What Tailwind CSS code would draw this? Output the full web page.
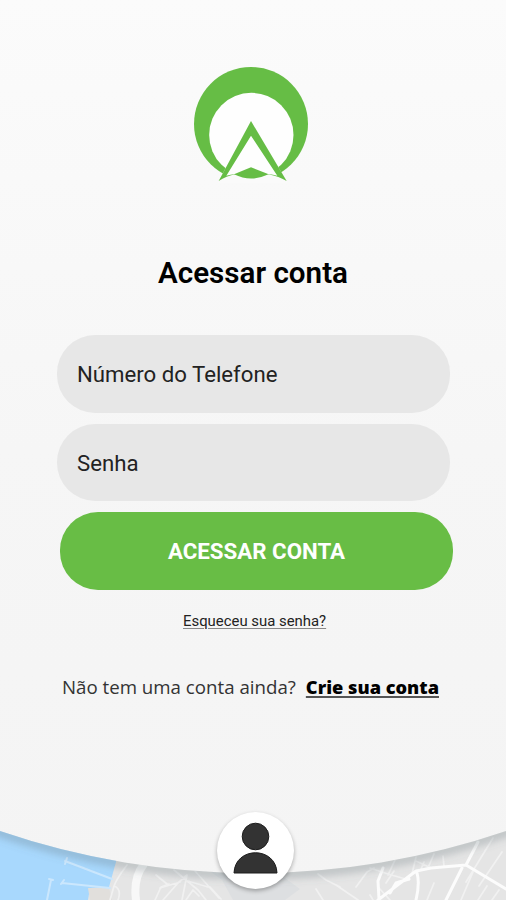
<!DOCTYPE html>
<html lang="pt-BR">
<head>
    <meta charset="UTF-8">
    <meta name="viewport" content="width=device-width, initial-scale=1.0">
    <title>Acessar conta</title>
    <script src="https://cdn.jsdelivr.net/npm/@tailwindcss/browser@4"></script>
</head>
<body class="font-[Roboto,sans-serif] text-black">
    <main class="relative flex flex-col w-[506px] h-[900px] overflow-hidden bg-gradient-to-b from-[#fbfbfb] via-[#f6f6f6] to-[#f4f4f4]">
        <!-- Logo -->
        <svg class="mt-[55px] ml-[180px] w-[140px] h-[140px] shrink-0" viewBox="0 0 420 420">
            <circle cx="213" cy="207" r="171" fill="#66bd45"/>
            <circle cx="214" cy="240" r="126.5" fill="#fefefe"/>
            <path d="M213 198L113 384H323Z" fill="#fafafa"/>
            <path d="M213 242L133 366L170 358L213 366L260 358L300 366Z" fill="#fefefe"/>
            <path d="M213 198L320 378Q298 365 264 358L264 357Q280 359 292 362L213 242L139 362Q150 359 168 357L168 358Q138 363 116 378Z" fill="#66bd45"/>
            <path d="M162 358L213 337L266 358Q213 383 162 358Z" fill="#66bd45"/>
        </svg>

        <h1 class="mt-[60px] ml-[158px] text-[29.6px] leading-9 font-semibold whitespace-nowrap">Acessar conta</h1>

        <!-- Login form -->
        <form class="mt-[44px] ml-[57px] flex flex-col gap-[11px]">
            <div class="flex items-center w-[393px] h-[78px] rounded-[38px] bg-[#e7e7e7] pt-0.5 pl-5 text-[22.2px] text-[#222]">Número do Telefone</div>
            <div class="flex items-center w-[393px] h-[77px] rounded-[38px] bg-[#e7e7e7] pt-0.5 pl-5 text-[22.2px] text-[#222]">Senha</div>
            <button type="button" class="ml-[3px] w-[393px] h-[78px] rounded-[38px] bg-[#68bd45] pt-0.5 text-[22.3px] font-bold text-white">ACESSAR CONTA</button>
        </form>

        <a href="#" class="mt-[21px] ml-[183px] self-start text-[14.9px] leading-5 text-[#222] underline decoration-[#888] underline-offset-2 whitespace-nowrap">Esqueceu sua senha?</a>

        <p class="mt-[42px] ml-[62px] flex items-center gap-[10px] font-['Open_Sans',sans-serif] text-[18.7px] leading-7 text-[#333] whitespace-nowrap">
            <span>Não tem uma conta ainda?</span>
            <a href="#" class="text-[18.2px] font-extrabold text-black underline decoration-[#555] decoration-2 underline-offset-2">Crie sua conta</a>
        </p>

        <!-- Map strip under the curved panel -->
        <svg class="mt-auto w-[506px] h-[80px] shrink-0" viewBox="0 820 506 80">
            <defs>
                <clipPath id="strip">
                    <path d="M0 831A783 783 0 0 0 506 831V900H0Z"/>
                </clipPath>
                <filter id="soft" x="-10%" y="-50%" width="120%" height="200%">
                    <feGaussianBlur stdDeviation="4"/>
                </filter>
            </defs>
            <g clip-path="url(#strip)" fill="none" stroke-linecap="round" stroke-linejoin="round">
                <rect y="820" width="506" height="80" fill="#e5e5e5"/>
                <path d="M195 860L222 880L233 900H285L300 889L260 860Z" fill="#dddfe1"/>
                <path d="M0 820H118L116 862L109 887L90 888L88 900H0Z" fill="#a8d8fd"/>
                <path d="M88 888H109L112 900H90Z" fill="#e1dfdc"/>
                <g stroke="#cbe7fd" stroke-width="2">
                    <path d="M65 861L112 879M67 858L65 864M62 883L110 888M64 880L61 884M51 880L47 900M49 879L53 880"/>
                </g>
                <path d="M144 864Q133 878 136 900" stroke="#f8f8f8" stroke-width="8"/>
                <g stroke="#f1f1f1" stroke-width="1.7">
                    <path d="M127 865Q117 878 114 886Q122 889 118 900M155 900L161 887L169 884M156 875L167 884M110 900L114 886"/>
                    <path d="M163 900L178 883L187 875M187 875L182 900M174 870L198 890L206 900M195 871L219 898M160 888L180 882M188 881L208 887M210 887L221 899M186 900L193 890L199 896"/>
                    <path d="M318 874L326 880L340 887M316 889L323 900M336 885L358 900"/>
                    <path d="M356 887L367 872L374 868M370 868L388 874L409 880M388 875L395 860M412 874L416 857M416 861L431 868M428 868L434 854M443 856L444 866M379 888L390 900M370 895L373 900M386 883L394 871M421 869L424 862"/>
                    <path d="M493 838L466 882M502 852L479 886M473 872L461 900M487 886L478 900M499 890L492 900M434 883L427 900"/>
                </g>
                <g stroke="#fcfcfc" stroke-width="3">
                    <path d="M378 900L416 871L431 868L466 865L506 889M383 868L378 881L379 899M417 873Q420 883 416 900M466 865L478 842M462 868L446 900M390 893L396 883L409 879"/>
                </g>
                <!-- panel shadow -->
                <path d="M-10 829A783 783 0 0 0 516 829" stroke="#5d6b75" stroke-opacity=".36" stroke-width="8" filter="url(#soft)"/>
            </g>
        </svg>

        <!-- User badge -->
        <div class="absolute left-[217px] top-[812px] size-[77px] rounded-full bg-white shadow-[0_2px_4px_rgba(0,0,0,0.3)]">
            <svg class="size-full" viewBox="0 0 77 77" fill="#333" stroke="#1c1c1c" stroke-width="1">
                <circle cx="38.5" cy="24.5" r="13.3"/>
                <path d="M17 61C18 34 59 34 60 61Z"/>
            </svg>
        </div>
    </main>
</body>
</html>
